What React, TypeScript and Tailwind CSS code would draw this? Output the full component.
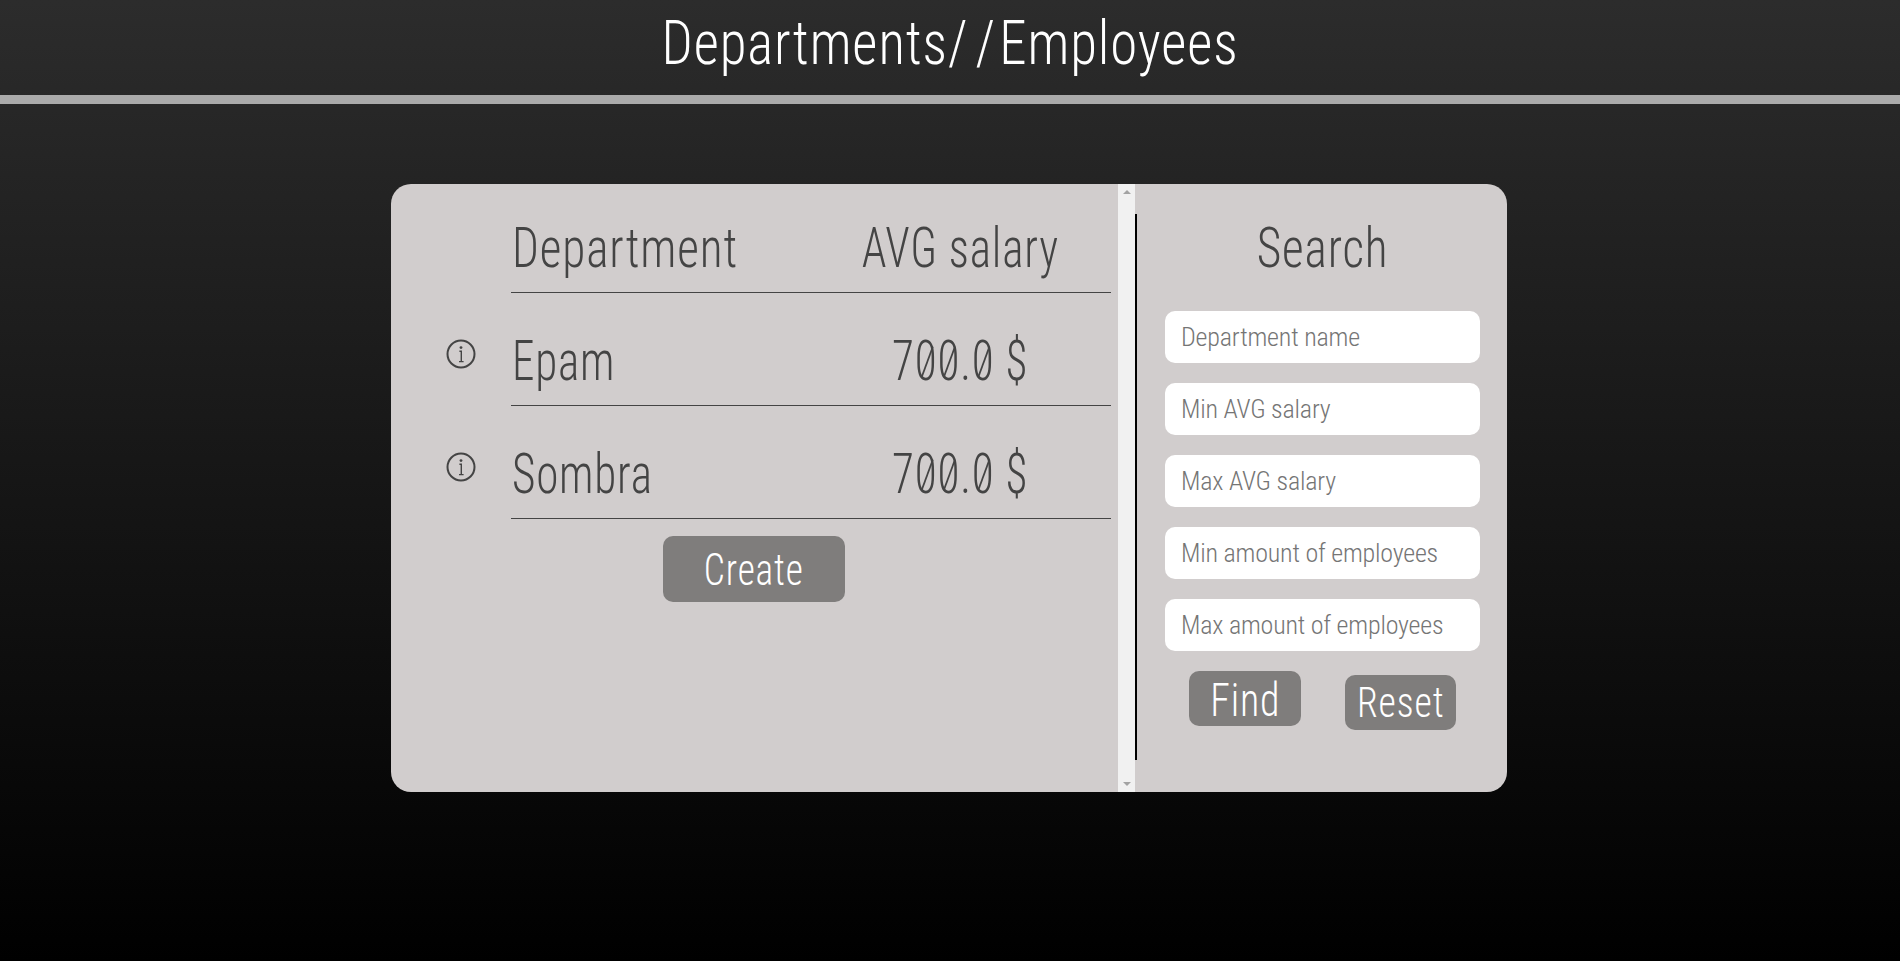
const DEPARTMENTS = [
  { name: 'Epam', salary: '700.0 $' },
  { name: 'Sombra', salary: '700.0 $' },
];

const FILTERS = [
  'Department name',
  'Min AVG salary',
  'Max AVG salary',
  'Min amount of employees',
  'Max amount of employees',
];

function InfoIcon() {
  return (
    <svg width="30" height="30" viewBox="0 0 30 30" fill="none" stroke="#444444">
      <circle cx="15" cy="15" r="13.5" strokeWidth="2" />
      <circle cx="15" cy="8.6" r="1.4" fill="#444444" stroke="none" />
      <path d="M13.4 12.2h1.9v10.4M13 22.6h4.6" strokeWidth="1.4" />
    </svg>
  );
}

// the reference font has slashed zeros, Roboto Condensed has no such glyph
function Zero() {
  return (
    <span className="relative inline-block">
      0
      <span className="absolute left-1/2 top-[11px] w-[2px] h-[34px] bg-[#444444] rotate-[24deg]" />
    </span>
  );
}

export default function App() {
  return (
    <div className="min-h-[961px] bg-[linear-gradient(#2c2c2c,#000000)] font-['Roboto_Condensed',sans-serif] font-light">
      {/* Header */}
      <header className="h-[95px] flex items-center justify-center overflow-hidden pb-[10px]">
        <h1 className="text-[62px] text-white font-light tracking-[1px] scale-x-[0.885] whitespace-nowrap">
          Departments<span className="tracking-[9px]">/</span>/<span className="ml-[4px]">Employees</span>
        </h1>
      </header>
      <div className="h-[9px] bg-[#aaaaaa]" />

      {/* Card */}
      <main className="w-[1116px] h-[608px] ml-[391px] mt-[80px] flex rounded-[20px] bg-[#d1cdcd] text-[#444444] overflow-hidden">
        <section className="w-[727px] shrink-0 pr-[7px]">
          <div className="flex h-[109px]">
            <div className="w-[120px] shrink-0" />
            <div className="flex-1 flex border-b border-[#444444] text-[55px] leading-none">
              <div className="w-[298px] pt-[37px] pl-[1px]">
                <span className="inline-block origin-left scale-x-[0.86] tracking-[1px] whitespace-nowrap">Department</span>
              </div>
              <div className="flex-1 pt-[37px] text-center whitespace-nowrap">
                <span className="inline-block scale-x-[0.82] tracking-[1px]">AVG salary</span>
              </div>
            </div>
          </div>

          {DEPARTMENTS.map((d) => (
            <div key={d.name} className="flex h-[113px]">
              <div className="w-[120px] shrink-0 pl-[55px] pt-[46px]">
                <InfoIcon />
              </div>
              <div className="flex-1 flex border-b border-[#444444] text-[55px] leading-none">
                <div className="w-[298px] pt-[41px] pl-[1px]">
                  <span className="inline-block origin-left scale-x-[0.82] tracking-[1px]">{d.name}</span>
                </div>
                <div className="flex-1 pt-[41px] text-center whitespace-nowrap">
                  <span className="inline-block scale-x-[0.82] tracking-[1px]">
                    7<Zero /><Zero />.<Zero /> $
                  </span>
                </div>
              </div>
            </div>
          ))}

          <button className="block ml-[272px] mt-[17px] w-[182px] h-[66px] rounded-[10px] bg-[#7f7d7c] text-white text-[44px] leading-none pt-[2px]">
            <span className="inline-block scale-x-[0.85] tracking-[1px]">Create</span>
          </button>
        </section>

        {/* Scrollbar */}
        <div className="w-[17px] shrink-0 bg-[#f1f1f1] flex flex-col items-center justify-between py-[6px]">
          <div className="w-0 h-0 border-x-[4px] border-x-transparent border-b-[4px] border-b-[#a3a3a3]" />
          <div className="w-0 h-0 border-x-[4px] border-x-transparent border-t-[4px] border-t-[#a3a3a3]" />
        </div>
        <div className="w-[2px] h-[546px] mt-[30px] bg-black shrink-0" />

        {/* Search */}
        <aside className="flex-1">
          <h2 className="pt-[37px] pl-[2px] h-[127px] text-center text-[55px] leading-none font-light whitespace-nowrap">
            <span className="inline-block scale-x-[0.86] tracking-[1px]">Search</span>
          </h2>
          <div className="ml-[28px] w-[315px] flex flex-col gap-[20px]">
            {FILTERS.map((f) => (
              <input
                key={f}
                placeholder={f}
                className="h-[52px] w-full rounded-[10px] bg-white pl-[16px] text-[26px] tracking-[-0.2px] text-[#444444] placeholder:text-[#757575] outline-none"
              />
            ))}
          </div>
          <div className="flex items-start ml-[52px] mt-[20px]">
            <button className="w-[112px] h-[55px] rounded-[10px] bg-[#7f7d7c] text-white text-[47px] leading-none pt-[2px]">
              <span className="inline-block scale-x-[0.85] tracking-[1px]">Find</span>
            </button>
            <button className="w-[111px] h-[55px] ml-[44px] mt-[4px] rounded-[10px] bg-[#7f7d7c] text-white text-[42px] leading-none">
              <span className="inline-block scale-x-[0.9] tracking-[1px]">Reset</span>
            </button>
          </div>
        </aside>
      </main>
    </div>
  );
}
